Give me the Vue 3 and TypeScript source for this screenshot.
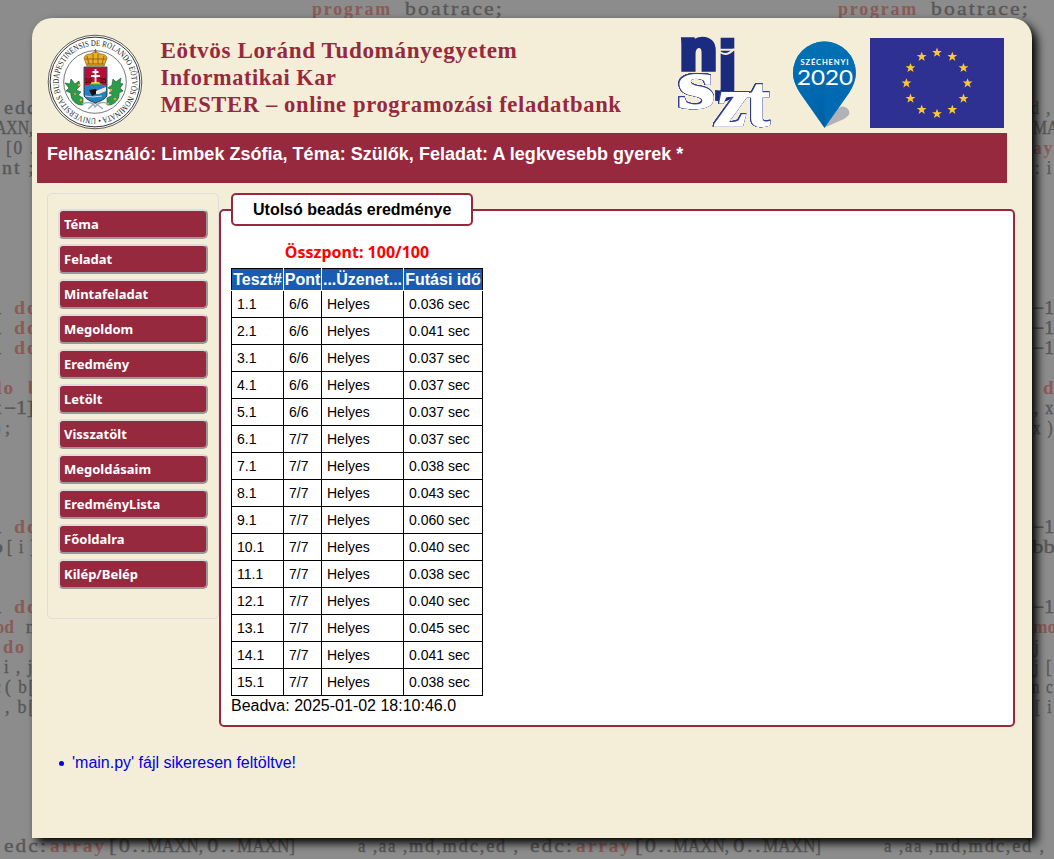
<script setup lang="ts">
interface Snippet {
  x: number
  y: number
  text: string
  w?: number
  red?: boolean
  tight?: boolean
}

const tileOffsets: number[] = [0, 526, 1052]

const code: Snippet[] = [
  { x: 312, y: 14, text: 'program', w: 80, red: true },
  { x: 405, y: 14, text: 'boatrace;', w: 99 },
  { x: -21, y: 113, text: 'd ,', w: 21 },
  { x: 4, y: 113, text: 'edc', w: 34 },
  { x: -19, y: 133, text: 'MAXN,', w: 52, tight: true },
  { x: -19, y: 153, text: 'ay', w: 21, red: true },
  { x: 6, y: 153, text: '[0 .', w: 30 },
  { x: -17, y: 173, text: ': i', w: 18 },
  { x: 2, y: 173, text: 'nt ;', w: 34 },
  ...[313, 333, 353, 532, 612].flatMap((y): Snippet[] => [
    { x: -19, y, text: '−1', w: 21, tight: true },
    { x: 14, y, text: 'do', w: 25, red: true },
  ]),
  { x: -9, y: 393, text: 'do', w: 24, red: true },
  { x: 28, y: 393, text: 'b', red: true },
  { x: -18, y: 413, text: ', x', w: 21 },
  { x: 4, y: 413, text: '−1]', w: 30, tight: true },
  { x: -19, y: 433, text: 'x )', w: 21 },
  { x: 5, y: 433, text: ';' },
  { x: -20, y: 552, text: 'bb', w: 23, tight: true },
  { x: 7, y: 552, text: '[ i ]', w: 30 },
  { x: -19, y: 632, text: 'mod', w: 33, red: true, tight: true },
  { x: 26, y: 632, text: 'n' },
  { x: -18, y: 652, text: 'j' },
  { x: 3, y: 652, text: 'do', w: 23, red: true },
  { x: -18, y: 672, text: 'j [', w: 19 },
  { x: 4, y: 672, text: 'i , j', w: 30 },
  { x: -20, y: 692, text: 'n c', w: 22 },
  { x: 5, y: 692, text: '( b[', w: 31 },
  { x: -17, y: 712, text: '[ i', w: 18 },
  { x: 5, y: 712, text: ', b[', w: 31 },
  { x: 4, y: 851, text: 'edc:', w: 44 },
  { x: 50, y: 851, text: 'array', w: 56, red: true },
  { x: 109, y: 851, text: '[0..', w: 39 },
  { x: 147, y: 851, text: 'MAXN,', w: 56, tight: true },
  { x: 207, y: 851, text: '0..', w: 30 },
  { x: 237, y: 851, text: 'MAXN]', w: 58, tight: true },
  { x: 352, y: 851, text: ' a ,aa ,', w: 57 },
  { x: 409, y: 851, text: 'md,mdc,ed ,', w: 111 },
]

const menu: string[] = [
  'Téma', 'Feladat', 'Mintafeladat', 'Megoldom', 'Eredmény', 'Letölt',
  'Visszatölt', 'Megoldásaim', 'EredményLista', 'Főoldalra', 'Kilép/Belép',
]

const times: string[] = [
  '0.036', '0.041', '0.037', '0.037', '0.037', '0.037', '0.038', '0.043',
  '0.060', '0.040', '0.038', '0.040', '0.045', '0.041', '0.038',
]
const results = times.map((time, i) => ({
  id: `${i + 1}.1`,
  points: i < 5 ? '6/6' : '7/7',
  time: `${time} sec`,
}))

const stars = Array.from({ length: 12 }, (_, i) => {
  const a = (i * Math.PI) / 6
  return `translate(${67 + 30.6 * Math.sin(a)} ${45.2 - 30.6 * Math.cos(a)})`
})
</script>

<template>
  <div class="page">
    <svg class="backdrop" width="1054" height="859" aria-hidden="true">
      <g v-for="dx in tileOffsets" :key="dx" :transform="`translate(${dx} .5)`">
        <text
          v-for="(s, i) in code" :key="i" :x="s.x" :y="s.y"
          :textLength="s.w" lengthAdjust="spacingAndGlyphs" :class="{ red: s.red, tight: s.tight }"
        >{{ s.text }}</text>
      </g>
    </svg>

    <div class="sheet">
      <header class="head">
        <svg class="seal" width="96" height="96" viewBox="-48 -48 96 96">
          <defs>
            <path id="ring" d="M 1 36.2 A 36.2 36.2 0 0 1 -1 -36.2 A 36.2 36.2 0 0 1 4 36" />
          </defs>
          <circle r="46.8" fill="#fff" stroke="#333" stroke-width=".8" />
          <circle r="44.9" fill="none" stroke="#333" stroke-width="1" />
          <circle r="31.3" fill="none" stroke="#555" stroke-width=".8" />
          <text class="ring-text"><textPath href="#ring" textLength="226" lengthAdjust="spacingAndGlyphs">UNIVERSITAS BUDAPESTINENSIS DE ROLANDO EÖTVÖS NOMINATA •</textPath></text>
          <g fill="#2d9b4b" stroke="#186b32" stroke-width=".7">
            <path d="M-12 23 C-20 24 -25 16 -24 11 L-29 9 L-26 6 L-30 1 L-25 2 L-24 -3 L-20 2 L-16 -1 L-15 4 L-19 8 L-14 10 L-17 13 L-12 16 Z" />
            <path d="M12 23 C20 24 25 16 24 11 L28 9 L25 6 L28 2 L25 1 L26 -4 L21 0 L18 -3 L17 3 L13 6 L18 8 L14 11 L18 13 L12 16 Z" />
          </g>
          <path d="M-13 22 Q-3 18 0 25 Q5 18 14 22 M-7 27 L0 21 L8 27" fill="none" stroke="#9eaeb6" stroke-width="1.5" />
          <g fill="#e9a821">
            <circle cx="-16" cy="3" r="1.3" /><circle cx="-14" cy="18" r="1.3" /><circle cx="-20" cy="12" r="1" />
            <circle cx="16" cy="8" r="1.3" /><circle cx="20" cy="17" r="1.3" /><circle cx="12" cy="22" r="1" />
          </g>
          <path d="M-11 -15 H12 V13 Q12 17 0.5 21 Q-11 17 -11 13 Z" fill="#2582bd" stroke="#123" stroke-width=".8" />
          <path d="M-10.5 -14.5 H11.5 V3 H-10.5 Z" fill="#b41235" />
          <path d="M-6 3 Q1 -4 8 3 Z" fill="#45a046" />
          <path d="M-4 1 H5" stroke="#edb52c" stroke-width="2" />
          <path d="M.5 1 V-13 M-2.5 -10 H3.5 M-4 -6 H5" stroke="#fff" stroke-width="1.8" />
          <text class="year" x="-10.5" y="1">16</text><text class="year" x="4" y="1">35</text>
          <path d="M-6 8 L1 7 L3 11 L-3 14 Z" fill="#111" />
          <path d="M1 9 L11 5 V9 L4 12 L1 12 Z" fill="#f4e7d7" />
          <path d="M-10 14 L-2 15 L7 14" fill="none" stroke="#c2e0ef" stroke-width="1" />
          <path d="M-8 -16 L-11 -24 Q-10 -28 -4 -28 Q.5 -32 5 -28 Q11 -28 12 -24 L9 -16 Z" fill="#edae24" stroke="#8f641d" stroke-width=".8" />
          <path d="M-6 -18 L-8 -26 M-2 -18 V-28 M3 -18 V-28 M7 -18 L9 -26 M-10 -23 H11 M-8 -18 H9 M.5 -29 V-33 M-1 -31 H2" fill="none" stroke="#805722" stroke-width=".8" />
        </svg>

        <svg class="title" width="465" height="90" viewBox="0 0 465 90">
          <text x="-.5" y="23.2" textLength="357" lengthAdjust="spacingAndGlyphs">Eötvös Loránd Tudományegyetem</text>
          <text x="-.5" y="50.2" textLength="176" lengthAdjust="spacingAndGlyphs">Informatikai Kar</text>
          <text x="-.5" y="77.2" textLength="461" lengthAdjust="spacingAndGlyphs">MESTER – online programozási feladatbank</text>
        </svg>

        <svg class="njszt" width="96" height="93" viewBox="0 0 96 93">
          <g class="nj">
            <text transform="translate(2.2 33.3) scale(.87 .82)">n</text>
            <text class="j" transform="translate(40.5 50) scale(.95 .93)">j</text>
            <path d="M39 13 Q47 23 56 13" fill="none" stroke="#f4edd7" stroke-width="2" />
          </g>
          <g class="szt">
            <text transform="translate(-.5 71.5) scale(1.34 .97)" font-size="72">s</text>
            <text class="slant" transform="translate(39 89.5) scale(1.08 .97)" font-size="75">z</text>
            <text transform="translate(68.5 89.5) scale(.95 .98)" font-size="74">t</text>
          </g>
        </svg>

        <svg class="pin" width="64" height="90" viewBox="0 0 64 90">
          <defs>
            <linearGradient id="pinFill" x1="0" y1="0" x2="1" y2="0">
              <stop offset="0" stop-color="#0076b9" /><stop offset=".49" stop-color="#005d9f" />
              <stop offset=".51" stop-color="#006ab0" /><stop offset="1" stop-color="#0069b4" />
            </linearGradient>
            <linearGradient id="pinTop" x1="0" y1="0" x2="0" y2="1">
              <stop offset="0" stop-color="#0072b3" /><stop offset=".45" stop-color="#0069b2" />
              <stop offset="1" stop-color="#0069b2" stop-opacity="0" />
            </linearGradient>
          </defs>
          <path d="M31.5 87.5 L44 70 Q48 64 54 68 Q60 74 51 79 Q42 83 31.5 87.5Z" fill="#b1b2b6" />
          <path d="M31.5 88 L7 53 Q0 42 0 33 A31.4 31.4 0 0 1 62.8 33 Q62.8 42 56 53 Z" fill="url(#pinFill)" />
          <path d="M31.5 88 L7 53 Q0 42 0 33 A31.4 31.4 0 0 1 62.8 33 Q62.8 42 56 53 Z" fill="url(#pinTop)" />
          <text class="pin-name" x="7.5" y="25" textLength="48">SZÉCHENYI</text>
          <text class="pin-year" x="4" y="44.5" textLength="56" lengthAdjust="spacingAndGlyphs">2020</text>
        </svg>

        <svg class="flag" width="134" height="90" viewBox="0 0 134 90">
          <rect width="134" height="90" fill="#2e3192" />
          <path
            v-for="(t, i) in stars" :key="i" :transform="t" fill="#fdc82f"
            d="M0 -5 L1.3 -1.6 H4.9 L2 .65 L3.1 4.2 L0 2.1 L-3.1 4.2 L-2 .65 L-4.9 -1.6 H-1.3 Z"
          />
        </svg>
      </header>

      <div class="banner">Felhasználó: Limbek Zsófia, Téma: Szülők, Feladat: A legkvesebb gyerek *</div>

      <div class="columns">
        <nav class="menu">
          <a v-for="item in menu" :key="item" class="item">{{ item }}</a>
        </nav>
        <fieldset class="results">
          <legend>Utolsó beadás eredménye</legend>
          <table>
            <caption>Összpont: 100/100</caption>
            <colgroup><col class="c1"><col class="c2"><col class="c3"><col class="c4"></colgroup>
            <thead>
              <tr><th>Teszt#</th><th>Pont</th><th>...Üzenet...</th><th>Futási idő</th></tr>
            </thead>
            <tbody>
              <tr v-for="r in results" :key="r.id">
                <td>{{ r.id }}</td><td>{{ r.points }}</td><td>Helyes</td><td>{{ r.time }}</td>
              </tr>
            </tbody>
          </table>
          <div class="sent">Beadva: 2025-01-02 18:10:46.0</div>
        </fieldset>
      </div>

      <ul class="messages"><li>'main.py' fájl sikeresen feltöltve!</li></ul>
    </div>
  </div>
</template>

<style>
body { background: #8c8c8c; overflow: hidden; }
</style>

<style scoped>
.page {
  position: relative;
  width: 1054px;
  height: 859px;
  overflow: hidden;
  box-sizing: border-box;
  padding: 18px 22px 0 32px;
  background: #8c8c8c;
  font: 16px/18px "Liberation Sans", Arial, sans-serif;
}
.backdrop { position: absolute; left: 0; top: 0; }
.backdrop text {
  font: 18px "Liberation Serif", serif;
  letter-spacing: 1.8px;
  fill: #585858;
  stroke: #585858;
  stroke-width: .4px;
  white-space: pre;
}
.backdrop .red { font-weight: bold; fill: #8a5a57; stroke: none; }
.backdrop .tight { letter-spacing: 0; }
.sheet {
  position: relative;
  box-sizing: border-box;
  width: 1000px;
  height: 820px;
  padding: 0 17px 0 5px;
  border-radius: 20px 20px 0 0;
  background: #f4edd7;
  box-shadow: 5px 5px 10px #000;
}
.head { display: flex; align-items: flex-start; height: 115px; }
.head svg { flex: none; display: block; }
.seal { margin: 16px 0 0 10px; }
.ring-text { font: 8.6px "Liberation Serif", serif; fill: #222; }
.year { font: 6.5px "Liberation Sans", sans-serif; fill: #300; }
.title { margin: 17px 0 0 18px; overflow: visible; }
.title text { font: bold 22.5px "Liberation Serif", serif; letter-spacing: .6px; fill: #97293f; }
.njszt { margin: 18px 0 0 52px; overflow: visible; }
.nj text { font: bold 68px "Liberation Sans", sans-serif; fill: #1a2b80; stroke: #1a2b80; stroke-width: 7px; }
.nj .j { stroke-width: 5px; }
.szt {
  filter: drop-shadow(.5px 0 0 #2f3e98) drop-shadow(-.5px 0 0 #2f3e98) drop-shadow(0 .5px 0 #2f3e98) drop-shadow(0 -.5px 0 #2f3e98);
}
.szt text { font-family: "Liberation Serif", serif; font-weight: bold; fill: #fff; stroke: #fff; stroke-width: 1.5px; }
.szt .slant { font-style: italic; }
.pin { margin: 22px 0 0 19px; }
.pin-name { font: bold 7.6px Lato, sans-serif; fill: #fff; }
.pin-year { font: 21px Lato, sans-serif; fill: #fff; }
.flag { margin: 20px 0 0 13px; }
.banner {
  box-sizing: border-box;
  width: 970px;
  height: 50px;
  padding: 11px 10px 0;
  background: #97293f;
  color: #fff;
  font-size: 18px;
  font-weight: bold;
  line-height: 21px;
  letter-spacing: .02px;
}
.columns { display: flex; align-items: flex-start; margin: 10px 0 0 10px; }
.menu {
  box-sizing: border-box;
  width: 172px;
  height: 426px;
  padding: 15px 10px 0;
  border: 1px solid #ddd;
  border-radius: 5px;
}
.item {
  display: block;
  box-sizing: border-box;
  width: 150px;
  height: 30px;
  margin-bottom: 5px;
  padding-left: 4px;
  border: 2px solid;
  border-color: #ddd #999 #999 #ddd;
  border-radius: 5px;
  background: #97293f;
  color: #fff;
  font: bold 13px/26px "Noto Sans", sans-serif;
}
.results {
  box-sizing: border-box;
  width: 796px;
  height: 534px;
  margin: 0;
  padding: 0 10px;
  border: 2px solid #97293f;
  border-radius: 5px;
  background: #fff;
}
legend {
  box-sizing: border-box;
  width: 242px;
  height: 33px;
  padding: 0 0 0 20px;
  border: 2px solid #97293f;
  border-radius: 5px;
  background: #fff;
  font-weight: bold;
  line-height: 29px;
}
table { width: 252px; table-layout: fixed; border: 1px solid #000; border-collapse: collapse; }
caption { height: 42px; color: #f00; font: bold 16px/22px "Noto Sans", sans-serif; padding-top: 15px; box-sizing: border-box; }
.c1 { width: 52px; }
.c2 { width: 38px; }
.c3 { width: 82px; }
.c4 { width: 79px; }
th {
  height: 20px;
  padding: 1px 0 0;
  border: 1px solid #fff;
  background: #195cb1;
  color: #fff;
  line-height: 18px;
  white-space: nowrap;
}
thead tr, th { border-top: 1px solid #000; }
th:first-child { border-left-color: #000; }
th:last-child { border-right-color: #000; }
td {
  height: 16px;
  padding: 5px;
  border: 1px solid #000;
  color: #000;
  font-size: 14px;
  line-height: 16px;
}
.sent { line-height: 19px; }
.messages { margin: 27px 0 0; padding: 0 0 0 22px; color: #00e; list-style: none; }
.messages li { display: flex; align-items: center; gap: 8px; }
.messages li::before { content: ""; width: 5px; height: 5px; border-radius: 50%; background: #00e; }
</style>
